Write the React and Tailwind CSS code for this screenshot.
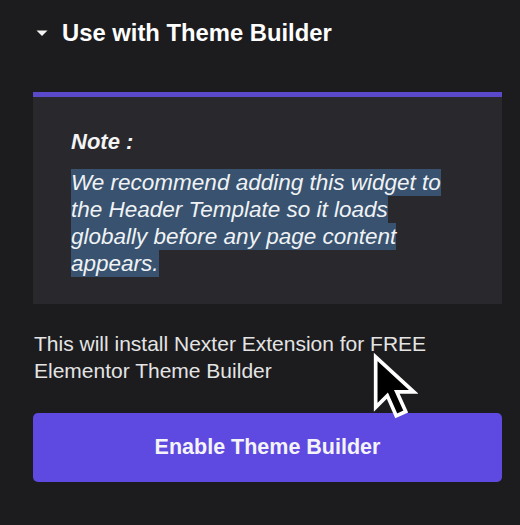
import React from 'react';

const NOTE_TEXT =
    'We recommend adding this widget to the Header Template so it loads globally before any page content appears.';

function Caret() {
    return (
        <svg width="14" height="7" viewBox="0 0 14 7" className="shrink-0">
            <path d="M1.5 0.5 L12.5 0.5 L7 6 Z" fill="#f2f2f2" />
        </svg>
    );
}

function Pointer() {
    return (
        <svg
            width="46"
            height="70"
            viewBox="0 0 15 22"
            className="absolute left-[372px] top-[352px] pointer-events-none"
        >
            <path
                d="M1.2 1.2 L1.2 17.6 L5 13.8 L7.9 20.4 L11 19 L8.1 12.6 L13.6 12.6 Z"
                fill="#000"
                stroke="#fff"
                strokeWidth="1.2"
                strokeLinejoin="miter"
            />
        </svg>
    );
}

export default function App() {
    return (
        <div className="relative min-h-[525px] w-[520px] bg-[#1c1c1f] font-['Liberation_Sans',Arial,sans-serif] pl-[33px] pr-[18px]">
            {/* Section heading */}
            <div className="flex items-center gap-[13px] pt-[19px] pl-[2px]">
                <Caret />
                <h2 className="text-[23.8px] leading-[28px] font-bold text-white">Use with Theme Builder</h2>
            </div>

            {/* Note card */}
            <div className="mt-[45px] bg-[#29292d] border-t-[5px] border-[#5a49c8] pl-[38px] pr-[32px] pt-[32px] pb-[27px]">
                <div className="text-[22px] leading-[26px] font-bold italic text-[#f4f4f4]">Note :</div>
                <p className="mt-[14px] text-[22.5px] leading-[27px] italic text-[#f0f2f5]">
                    <span className="bg-[#38526f] py-[1px] box-decoration-clone">{NOTE_TEXT}</span>
                </p>
            </div>

            <p className="mt-[26px] text-[21px] leading-[27px] text-[#e4e4e4] pl-[1px]">
                This will install Nexter Extension for FREE
                <br />
                Elementor Theme Builder
            </p>

            <button className="mt-[29px] flex h-[69px] w-full items-center justify-center rounded-[5px] bg-[#5e4ae1] text-[21.5px] font-bold text-[#f4f4f8]">
                Enable Theme Builder
            </button>

            <Pointer />
        </div>
    );
}
